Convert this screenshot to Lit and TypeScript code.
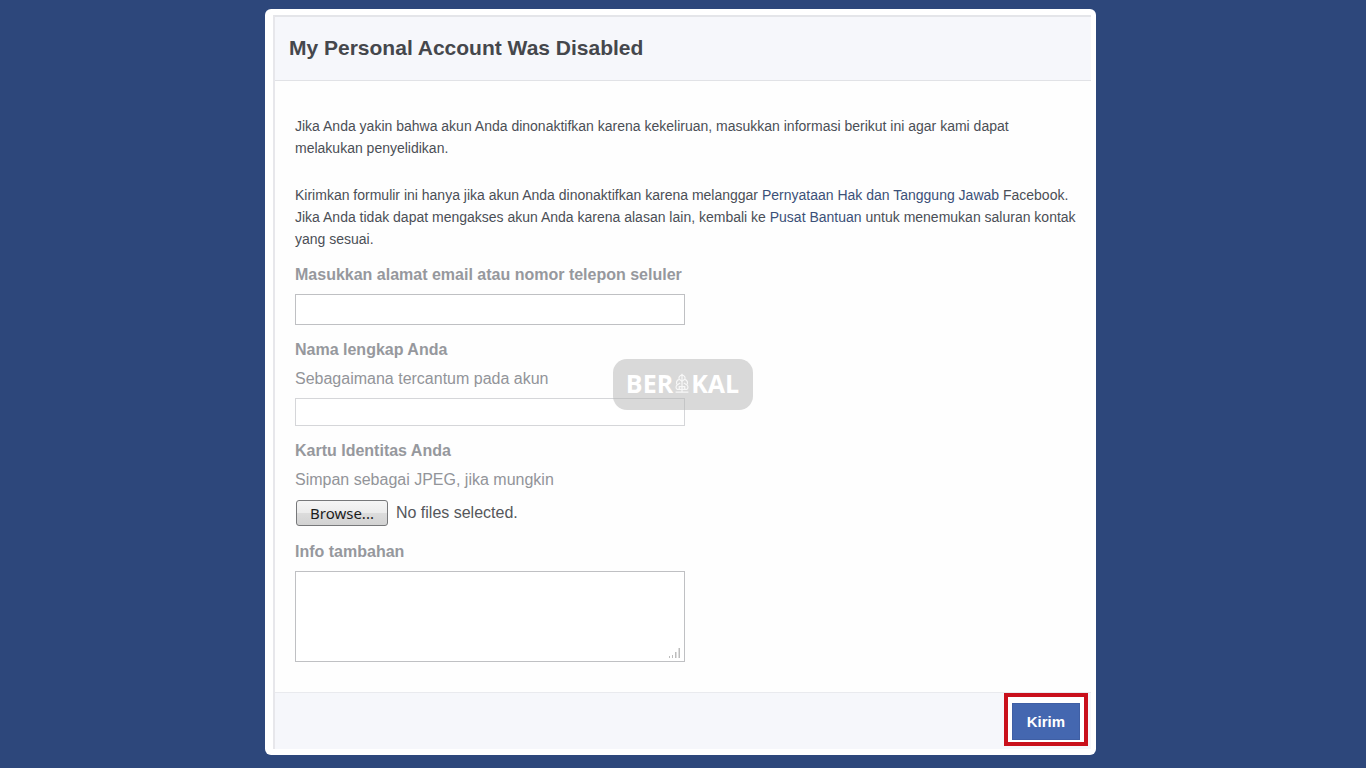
import { LitElement, html, css } from "lit";
import { customElement, state } from "lit/decorators.js";

@customElement("watermark-badge")
export class WatermarkBadge extends LitElement {
  static styles = css`
    :host {
      display: flex;
      align-items: center;
      justify-content: center;
      box-sizing: border-box;
      width: 140px;
      height: 51px;
      padding-bottom: 3px;
      border-radius: 14px;
      background: rgba(180, 180, 180, 0.5);
      color: #fff;
      font: 700 25px/32px "Open Sans", "Noto Sans", sans-serif;
    }
    .mark {
      display: block;
      width: 18px;
      height: 22px;
      opacity: 0.8;
    }
  `;

  render() {
    return html`
      <span>BER</span>
      <svg class="mark" viewBox="0 0 18 24" fill="none" stroke="#fff" stroke-width="1.3" aria-hidden="true">
        <path d="M9 2v20M9 3C6 4 5 6 6 8C3 9 2 12 4 14C2 15 2 18 4 19H14C16 18 16 15 14 14C16 12 15 9 12 8C13 6 12 4 9 3Z" />
        <path d="M6 8l3 2 3-2M4 14l3-2M14 14l-3-2M6 19v-3h6v3M2 22h14" />
      </svg>
      <span>KAL</span>
    `;
  }
}

@customElement("app-root")
export class AppRoot extends LitElement {
  @state() private fileName = "";

  static styles = css`
    :host {
      display: block;
      box-sizing: border-box;
      min-height: 100vh;
      padding: 9px 21px 14px 16px;
      background: #2d477b;
      color: #4b4f56;
      font: 14px/22px "Liberation Sans", Arial, sans-serif;
    }
    *,
    *::before {
      box-sizing: border-box;
    }
    .card {
      position: relative;
      max-width: 831px;
      margin: 0 auto;
      padding: 6px 5px 6px 8px;
      border-radius: 6px;
      background: #fff;
    }
    .panel {
      border-top: 2px solid #e4e5e9;
      border-left: 2px solid #e7e7eb;
      background: #fefefe;
    }
    .head {
      padding: 17px 14px 18px;
      border-bottom: 1px solid #e1e2e6;
      background: #f6f7fb;
    }
    h1 {
      margin: 0;
      color: #45474c;
      font-size: 21px;
      line-height: 28px;
      font-weight: 700;
    }
    .body {
      padding: 34px 12px 30px 20px;
    }
    .text {
      margin: 0 0 25px;
    }
    .text.last {
      margin-bottom: 15px;
    }
    a {
      color: #3b5078;
      text-decoration: none;
    }
    a:hover {
      text-decoration: underline;
    }
    .field {
      display: flex;
      flex-direction: column;
      align-items: flex-start;
      gap: 9px;
      margin-bottom: 15px;
    }
    .field:last-child {
      margin-bottom: 0;
    }
    .label {
      color: #96989d;
      font-size: 16px;
      line-height: 20px;
      font-weight: 700;
    }
    .hint {
      color: #929499;
      font-size: 16px;
      line-height: 20px;
    }
    .box {
      display: block;
      width: 100%;
      max-width: 390px;
      height: 31px;
      margin: 0;
      padding: 4px 6px;
      border: 1px solid #bfc0c3;
      border-radius: 0;
      background: #fff;
      color: #333;
      font: inherit;
    }
    .box.slim {
      height: 28px;
      border-color: #d5d6d9;
    }
    .area-wrap {
      position: relative;
      width: 100%;
      max-width: 390px;
    }
    .box.area {
      height: 91px;
      resize: none;
    }
    .grip {
      position: absolute;
      right: 3px;
      bottom: 3px;
      width: 14px;
      height: 12px;
      pointer-events: none;
    }
    .file {
      display: flex;
      align-items: center;
      gap: 8px;
      min-height: 28px;
      padding-left: 1px;
      color: #55575b;
      font-size: 16px;
    }
    .browse {
      height: 26px;
      padding: 0 13px;
      border: 1px solid #77787a;
      border-radius: 3px;
      background: linear-gradient(#f5f5f5, #ececec 48%, #dcdcdc 52%, #d2d2d2);
      color: #1c1c1c;
      font: 15px/22px "Noto Sans", sans-serif;
    }
    .foot {
      display: flex;
      justify-content: flex-end;
      padding: 0 3px 3px;
      border-top: 1px solid #e9eaee;
      background: #f6f7fb;
    }
    .ring {
      padding: 6px 4px 2px;
      border: 4px solid #c9101c;
      background: #fff;
    }
    .send {
      display: block;
      height: 37px;
      padding: 0 14px;
      border: 1px solid #3f5fa5;
      border-radius: 0;
      background: #4467b0;
      color: #fff;
      font: 700 15px/20px "Liberation Sans", Arial, sans-serif;
    }
    .mark {
      position: absolute;
      top: 350px;
      left: calc(50% - 68px);
      pointer-events: none;
    }
  `;

  private pick() {
    this.renderRoot.querySelector<HTMLInputElement>("#card")?.click();
  }

  private picked(e: Event) {
    this.fileName = (e.target as HTMLInputElement).files?.[0]?.name ?? "";
  }

  render() {
    return html`
      <main class="card">
        <form class="panel" @submit=${(e: Event) => e.preventDefault()}>
          <header class="head"><h1>My Personal Account Was Disabled</h1></header>
          <div class="body">
            <p class="text">
              Jika Anda yakin bahwa akun Anda dinonaktifkan karena kekeliruan, masukkan informasi berikut ini agar kami dapat
              <br />melakukan penyelidikan.
            </p>
            <p class="text last">
              Kirimkan formulir ini hanya jika akun Anda dinonaktifkan karena melanggar
              <a href="#terms">Pernyataan Hak dan Tanggung Jawab</a> Facebook.
              <br />Jika Anda tidak dapat mengakses akun Anda karena alasan lain, kembali ke
              <a href="#help">Pusat Bantuan</a> untuk menemukan saluran kontak
              <br />yang sesuai.
            </p>
            <div class="field">
              <label class="label" for="contact">Masukkan alamat email atau nomor telepon seluler</label>
              <input class="box" id="contact" type="text" />
            </div>
            <div class="field">
              <label class="label" for="name">Nama lengkap Anda</label>
              <span class="hint" id="name-hint">Sebagaimana tercantum pada akun</span>
              <input class="box slim" id="name" type="text" aria-describedby="name-hint" />
            </div>
            <div class="field">
              <label class="label" for="card">Kartu Identitas Anda</label>
              <span class="hint" id="card-hint">Simpan sebagai JPEG, jika mungkin</span>
              <div class="file">
                <input id="card" type="file" accept="image/jpeg" hidden aria-describedby="card-hint" @change=${this.picked} />
                <button class="browse" type="button" @click=${this.pick}>Browse...</button>
                <span>${this.fileName || "No files selected."}</span>
              </div>
            </div>
            <div class="field">
              <label class="label" for="info">Info tambahan</label>
              <div class="area-wrap">
                <textarea class="box area" id="info"></textarea>
                <svg class="grip" viewBox="0 0 14 12" fill="#bdbdbd" aria-hidden="true">
                  <path d="M1 9h1v2H1zM4 8h1v3H4zM7 5h1.500v6H7zM10.500 1H12v10h-1.500z" />
                </svg>
              </div>
            </div>
          </div>
          <footer class="foot">
            <div class="ring"><button class="send" type="submit">Kirim</button></div>
          </footer>
        </form>
        <watermark-badge class="mark"></watermark-badge>
      </main>
    `;
  }
}
